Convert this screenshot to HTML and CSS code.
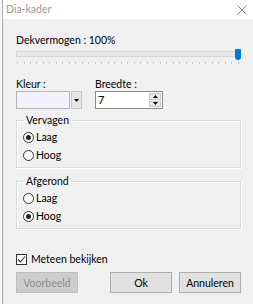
FILE: index.html
```html
<!DOCTYPE html>
<html lang="nl">
<head>
    <meta charset="UTF-8">
    <meta name="viewport" content="width=device-width, initial-scale=1.0">
    <title>Dia-kader</title>
    <link rel="stylesheet" href="styles.css">
</head>
<body>
    <div class="window">
        <div class="titlebar">
            <span class="title">Dia-kader</span>
            <svg class="close" width="10" height="10" viewBox="0 0 10 10">
                <path d="M0.5 0.5 L9.5 9.5 M9.5 0.5 L0.5 9.5" stroke="#8a8a8a" stroke-width="1" fill="none"/>
            </svg>
        </div>
        <div class="content">
            <div class="caption">Dekvermogen : 100%</div>
            <div class="slider">
                <div class="track"></div>
                <div class="thumb"></div>
            </div>
            <div class="ticks"></div>

            <div class="row">
                <div class="field">
                    <label class="field-label">Kleur :</label>
                    <div class="combo">
                        <div class="swatch"></div>
                        <div class="drop-btn">
                            <svg width="5" height="3" viewBox="0 0 5 3"><path d="M0 0 H5 L2.5 3 Z" fill="#000"/></svg>
                        </div>
                    </div>
                </div>
                <div class="field width-field">
                    <label class="field-label">Breedte :</label>
                    <div class="spin">
                        <span class="spin-value">7</span>
                        <div class="spin-btns">
                            <div class="spin-btn"><svg width="5" height="3" viewBox="0 0 5 3"><path d="M0 3 H5 L2.5 0 Z" fill="#000"/></svg></div>
                            <div class="spin-btn"><svg width="5" height="3" viewBox="0 0 5 3"><path d="M0 0 H5 L2.5 3 Z" fill="#000"/></svg></div>
                        </div>
                    </div>
                </div>
            </div>

            <fieldset class="group">
                <legend>Vervagen</legend>
                <div class="option"><span class="radio checked"></span>Laag</div>
                <div class="option"><span class="radio"></span>Hoog</div>
            </fieldset>

            <fieldset class="group group-second">
                <legend>Afgerond</legend>
                <div class="option"><span class="radio"></span>Laag</div>
                <div class="option"><span class="radio checked"></span>Hoog</div>
            </fieldset>

            <div class="check-row">
                <span class="checkbox">
                    <svg width="9" height="9" viewBox="0 0 9 9"><path d="M1 4.5 L3.5 7 L8 1.5" stroke="#333" stroke-width="1.1" fill="none"/></svg>
                </span>
                Meteen bekijken
            </div>

            <div class="button-row">
                <button class="btn" disabled>Voorbeeld</button>
                <button class="btn btn-ok">Ok</button>
                <button class="btn">Annuleren</button>
            </div>
        </div>
    </div>
</body>
</html>
```

FILE: styles.css
```css
html, body {
    margin: 0;
    padding: 0;
    height: 100%;
}
body {
    background: #f7f7f7;
    font-family: Lato, "Noto Sans", sans-serif;
    font-size: 10.5px;
    color: #000;
}
.window {
    margin-left: 2px;
    border-left: 1px solid #aaaaaa;
    background: #f0f0f0;
    height: 100%;
    box-sizing: border-box;
}
.titlebar {
    height: 19px;
    background: #fff;
    display: flex;
    align-items: center;
    justify-content: space-between;
    padding: 0 6px 0 3px;
}
.title {
    color: #9a9a9a;
    line-height: 19px;
}
.close {
    display: block;
    margin-top: 1px;
}
.content {
    padding: 14px 12px 0 13px;
}
.caption {
    line-height: 15px;
}
.slider {
    position: relative;
    height: 11px;
    margin-top: 1px;
}
.track {
    position: absolute;
    left: 0;
    right: 2px;
    top: 2px;
    height: 6px;
    background: #e7e7e7;
    border: 1px solid #d6d6d6;
    box-sizing: border-box;
}
.thumb {
    position: absolute;
    right: 0;
    top: 0;
    width: 6px;
    height: 11px;
    background: #0078d7;
    border-radius: 1px 1px 3px 3px;
}
.ticks {
    height: 2px;
    margin: 2px 2px 0 1px;
    background: repeating-linear-gradient(to right, #c4c4c4 0 1px, transparent 1px 6.5px);
}
.row {
    display: flex;
    margin-top: 13px;
}
.field {
    display: flex;
    flex-direction: column;
}
.width-field {
    margin-left: 13px;
}
.field-label {
    line-height: 14px;
}
.combo {
    display: flex;
    height: 18px;
}
.swatch {
    width: 54px;
    border: 1px solid #b4b4b4;
    background: #f2f3fa;
    box-sizing: border-box;
}
.drop-btn {
    width: 11px;
    margin-left: 1px;
    border: 1px solid #c8c8c8;
    background: #e6e6e6;
    box-sizing: border-box;
    display: flex;
    align-items: center;
    justify-content: center;
}
.spin {
    width: 68px;
    height: 18px;
    border: 1px solid #8c8c8c;
    background: #fff;
    box-sizing: border-box;
    display: flex;
    justify-content: space-between;
}
.spin-value {
    padding-left: 2px;
    line-height: 16px;
    font-size: 11px;
}
.spin-btns {
    width: 12px;
    display: flex;
    flex-direction: column;
    gap: 1px;
    padding: 1px 1px 1px 0;
}
.spin-btn {
    flex: 1;
    background: #e8e8e8;
    border: 1px solid #c8c8c8;
    display: flex;
    align-items: center;
    justify-content: center;
}
.group {
    margin: 4px 0 0 0;
    padding: 1px 0 3px 6px;
    border: 1px solid #dcdcdc;
    box-shadow: inset 1px 1px 0 #fff, 1px 1px 0 #fff;
}
.group-second {
    margin-top: 6px;
}
.group legend {
    padding: 0 2px;
    margin-left: 1px;
    line-height: 14px;
}
.option {
    display: flex;
    align-items: center;
    height: 18px;
}
.radio {
    width: 11px;
    height: 11px;
    border: 1px solid #333;
    border-radius: 50%;
    box-sizing: border-box;
    background: #fff;
    margin-right: 2px;
    display: flex;
    align-items: center;
    justify-content: center;
}
.radio.checked::after {
    content: "";
    width: 5px;
    height: 5px;
    border-radius: 50%;
    background: #222;
}
.check-row {
    display: flex;
    align-items: center;
    height: 16px;
    margin-top: 22px;
}
.checkbox {
    width: 11px;
    height: 11px;
    border: 1px solid #333;
    box-sizing: border-box;
    background: #fff;
    margin-right: 4px;
    display: flex;
    align-items: center;
    justify-content: center;
}
.checkbox svg {
    display: block;
}
.button-row {
    display: flex;
    gap: 7px;
    margin-top: 5px;
}
.btn {
    width: 62px;
    height: 21px;
    padding: 0;
    font-family: inherit;
    font-size: 10.5px;
    color: #000;
    background: #e1e1e1;
    border: 1px solid #adadad;
}
.btn:disabled {
    color: #8c8c8c;
    background: #cccccc;
    border-color: #bfbfbf;
}
.btn-ok {
    margin-left: auto;
}
```
